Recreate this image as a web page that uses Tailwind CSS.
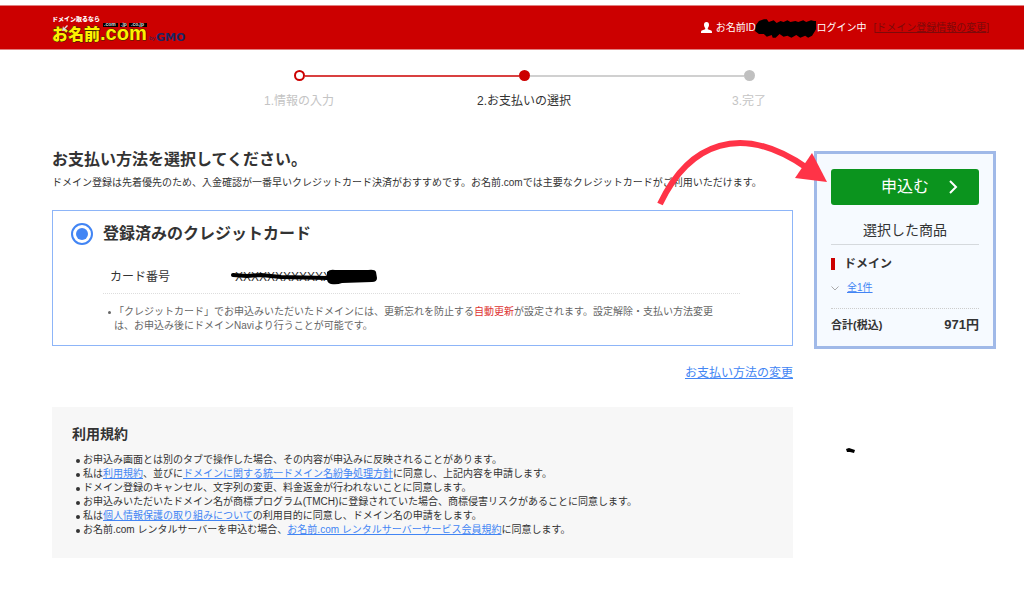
<!DOCTYPE html>
<html lang="ja">
<head>
<meta charset="utf-8">
<meta name="viewport" content="width=device-width, initial-scale=1">
<title>お支払いの選択 | お名前.com</title>
<script src="https://cdn.jsdelivr.net/npm/@tailwindcss/browser@4"></script>
</head>
<body class="relative min-h-screen bg-white pt-[5px] font-['Liberation_Sans','Noto_Sans_CJK_JP',sans-serif] text-[10px] leading-[14px] text-[#333]">

<header class="flex h-[45px] items-center justify-between border-y border-[#e08080] bg-[#cc0000] pl-[52px] pr-[35px]">
  <a href="#" aria-label="お名前.com by GMO" class="block">
    <svg class="block h-[30px] w-[140px]" viewBox="0 0 140 30" font-family="'Liberation Sans','Noto Sans CJK JP',sans-serif" font-weight="700">
      <text x="0" y="8" font-size="6" font-weight="900" fill="#fff">ドメイン取るなら</text>
      <g fill="#fff100" stroke="#3a2a00" stroke-width="1" paint-order="stroke" stroke-linejoin="round">
        <text x="0" y="27" font-size="16" font-weight="900">お名前</text>
        <text x="48" y="27" font-size="20">.com</text>
      </g>
      <g fill="#000"><rect x="51" y="10" width="15" height="4"/><rect x="68" y="10" width="7" height="4"/><rect x="77" y="10" width="18" height="4"/></g>
      <g fill="#ddd" font-size="5"><text x="52" y="13">.com</text><text x="69" y="13">.jp</text><text x="79" y="13">.co.jp</text></g>
      <path d="M10 18l1-5 1 2 3-3 1 1-3 3 2 1z" fill="#ddd"/>
      <text x="97" y="27" font-size="6" font-weight="400" fill="#2b2358">by</text>
      <text x="104" y="28" font-size="11" font-family="'DejaVu Sans',sans-serif" fill="#1b2563">GMO</text>
    </svg>
  </a>
  <div class="flex items-center text-white">
    <svg class="mr-1 size-[11px]" viewBox="0 0 11 11" fill="#fff" aria-hidden="true"><path d="M5.500 0C3.800 0 2.900 1.200 3 3c.1 1.500.6 2.300 1.200 2.900v1.300L.8 8.600C.2 8.900 0 9.500 0 11h11c0-1.500-.2-2.100-.8-2.400L6.800 7.200V5.900C7.400 5.300 7.900 4.500 8 3 8.100 1.200 7.200 0 5.500 0z"/></svg>
    <span>お名前ID:</span>
    <svg class="-ml-[3px] h-5 w-[61px]" viewBox="0 0 62 20" aria-label="非表示"><path d="M1 7L4 3l5-2 3 0 2 3 5-2 3 3 4-2 3 1 4-2 3 2 5-1 3 1 5-2 3 2 5-2 3 1 4 0 0 5-3 5-3 5-4 2-3-2-5 2-4-3-5 3-4-2-4 1-4-3-4 4-3 0-1-3-5 2-3-3-5 0-4-3z"/></svg>
    <span>ログイン中</span>
    <span class="ml-[7px] text-[#7c0a0a]">[<a href="#" class="underline">ドメイン登録情報の変更</a>]</span>
  </div>
</header>

<div class="pl-[52px] pr-7">
  <ol class="mx-auto grid w-[675px] max-w-full grid-cols-3 pt-5 text-center text-xs leading-4 text-[#c4c4c4]">
    <li>
      <div class="flex items-center"><span class="flex-1"></span><span class="size-[11px] rounded-full border-2 border-[#cc0000]"></span><span class="h-[2px] flex-1 bg-[#d94040]"></span></div>
      <p class="mt-3">1.情報の入力</p>
    </li>
    <li aria-current="step">
      <div class="flex items-center"><span class="h-[2px] flex-1 bg-[#d94040]"></span><span class="size-[11px] rounded-full bg-[#cc0000]"></span><span class="h-[2px] flex-1 bg-[#d0d0d0]"></span></div>
      <p class="mt-3 text-[#333]">2.お支払いの選択</p>
    </li>
    <li>
      <div class="flex items-center"><span class="h-[2px] flex-1 bg-[#d0d0d0]"></span><span class="size-[11px] rounded-full bg-[#c0c0c0]"></span><span class="flex-1"></span></div>
      <p class="mt-3">3.完了</p>
    </li>
  </ol>

  <div class="mt-[42px] flex items-start gap-[21px]">
    <main class="min-w-0 flex-1">
      <h1 class="text-base leading-[18px] font-bold">お支払い方法を選択してください。</h1>
      <p class="mt-[7px]">ドメイン登録は先着優先のため、入金確認が一番早いクレジットカード決済がおすすめです。お名前.comでは主要なクレジットカードがご利用いただけます。</p>

      <section class="mt-5 border border-[#8db5f8] pt-[11px] pr-[52px] pb-3 pl-[18px]">
        <div class="flex items-center gap-[10px]">
          <input id="card" type="radio" name="pay" checked class="size-[22px] appearance-none rounded-full border-2 border-[#4285f4] bg-white p-[3px] before:block before:size-full before:rounded-full checked:before:bg-[#4285f4]">
          <label for="card" class="text-base font-bold">登録済みのクレジットカード</label>
        </div>
        <dl class="mt-[6px] ml-8 flex h-[42px] items-center border-b border-dotted border-[#ddd] pt-2 pl-[7px] text-xs">
          <dt class="w-[121px]">カード番号</dt>
          <dd class="relative flex items-center pl-1">XXXXXXXXXXXX
            <svg class="absolute top-0 left-0 h-4 w-[146px]" viewBox="0 0 146 16" aria-hidden="true"><path d="M2 6l14 1 14-1 20 2 47 1" fill="none" stroke="#000" stroke-width="4" stroke-linecap="round"/><path d="M96 3q3-3 8-2l33 0q7-1 8 2l1 6q0 4-5 4l-30 1q-5 2-11 1-4-1-4-5z"/></svg>
          </dd>
        </dl>
        <ul class="mt-[11px] ml-[33px] list-none text-[#666]">
          <li class="flex gap-[3px] pl-1"><span class="mt-[6px] size-[3px] shrink-0 rounded-full bg-[#666]"></span><p>「クレジットカード」でお申込みいただいたドメインには、更新忘れを防止する<span class="text-[#dd3333]">自動更新</span>が設定されます。設定解除・支払い方法変更<br>は、お申込み後にドメインNaviより行うことが可能です。</p></li>
        </ul>
      </section>

      <p class="mt-[19px] text-right text-xs leading-4"><a href="#" class="text-[#4285f4] underline">お支払い方法の変更</a></p>

      <section class="mt-[26px] bg-[#f7f7f7] px-5 pt-[17px] pb-[21px]">
        <h2 class="text-sm font-bold">利用規約</h2>
        <ul class="mt-[9px] ml-[15px] [&_a]:text-[#4285f4] [&_a]:underline [&>li]:relative [&>li]:-ml-[4px] [&>li]:before:absolute [&>li]:before:top-[6px] [&>li]:before:-left-[7px] [&>li]:before:size-[4px] [&>li]:before:rounded-full [&>li]:before:bg-[#333]">
          <li>お申込み画面とは別のタブで操作した場合、その内容が申込みに反映されることがあります。</li>
          <li>私は<a href="#">利用規約</a>、並びに<a href="#">ドメインに関する統一ドメイン名紛争処理方針</a>に同意し、上記内容を申請します。</li>
          <li>ドメイン登録のキャンセル、文字列の変更、料金返金が行われないことに同意します。</li>
          <li>お申込みいただいたドメイン名が商標プログラム(TMCH)に登録されていた場合、商標侵害リスクがあることに同意します。</li>
          <li>私は<a href="#">個人情報保護の取り組みについて</a>の利用目的に同意し、ドメイン名の申請をします。</li>
          <li>お名前.com レンタルサーバーを申込む場合、<a href="#">お名前.com レンタルサーバーサービス会員規約</a>に同意します。</li>
        </ul>
      </section>
    </main>

    <aside class="w-[182px] shrink-0 border-3 border-[#a0b9e8] bg-[#f6faff] px-[14px] pt-[15px] pb-[13px]">
      <button type="button" class="relative block h-9 w-full rounded-[3px] bg-[#0b941e] text-base text-white">申込む
        <svg class="absolute top-[11px] right-[21px] h-[14px] w-[10px]" viewBox="0 0 10 14" fill="none" stroke="#fff" stroke-width="2" aria-hidden="true"><path d="M2 1l6 6-6 6"/></svg>
      </button>
      <h2 class="border-b border-[#d5d9dd] pt-[17px] pb-[6px] text-center text-sm leading-4">選択した商品</h2>
      <h3 class="mt-3 flex items-center gap-[9px] text-xs leading-[14px] font-bold"><span class="h-3 w-1 bg-[#cc0000]"></span>ドメイン</h3>
      <div class="mt-[10px] flex items-center gap-2 border-b border-dotted border-[#ccc] pb-[13px]">
        <svg class="h-[5px] w-2" viewBox="0 0 8 5" fill="none" stroke="#aaa" aria-hidden="true"><path d="M.5.500l3.500 3.500 3.500-3.500"/></svg>
        <a href="#" class="text-[#4285f4] underline">全1件</a>
      </div>
      <p class="mt-2 flex items-center justify-between text-[11px] leading-4 font-bold"><span>合計(税込)</span><span class="text-[13px] leading-4">971円</span></p>
    </aside>
  </div>
</div>

<svg class="pointer-events-none absolute top-0 left-0 h-[604px] w-[1024px]" viewBox="0 0 1024 604" aria-hidden="true">
  <path d="M660 204C689 143 741 122 807 168" fill="none" stroke="#ff3347" stroke-width="6"/>
  <path d="M827 182l-15-29-17 25z" fill="#ff3347"/>
  <path d="M846 449l3-1 6 2-1 3-4-1-3 0z"/>
</svg>
</body>
</html>
